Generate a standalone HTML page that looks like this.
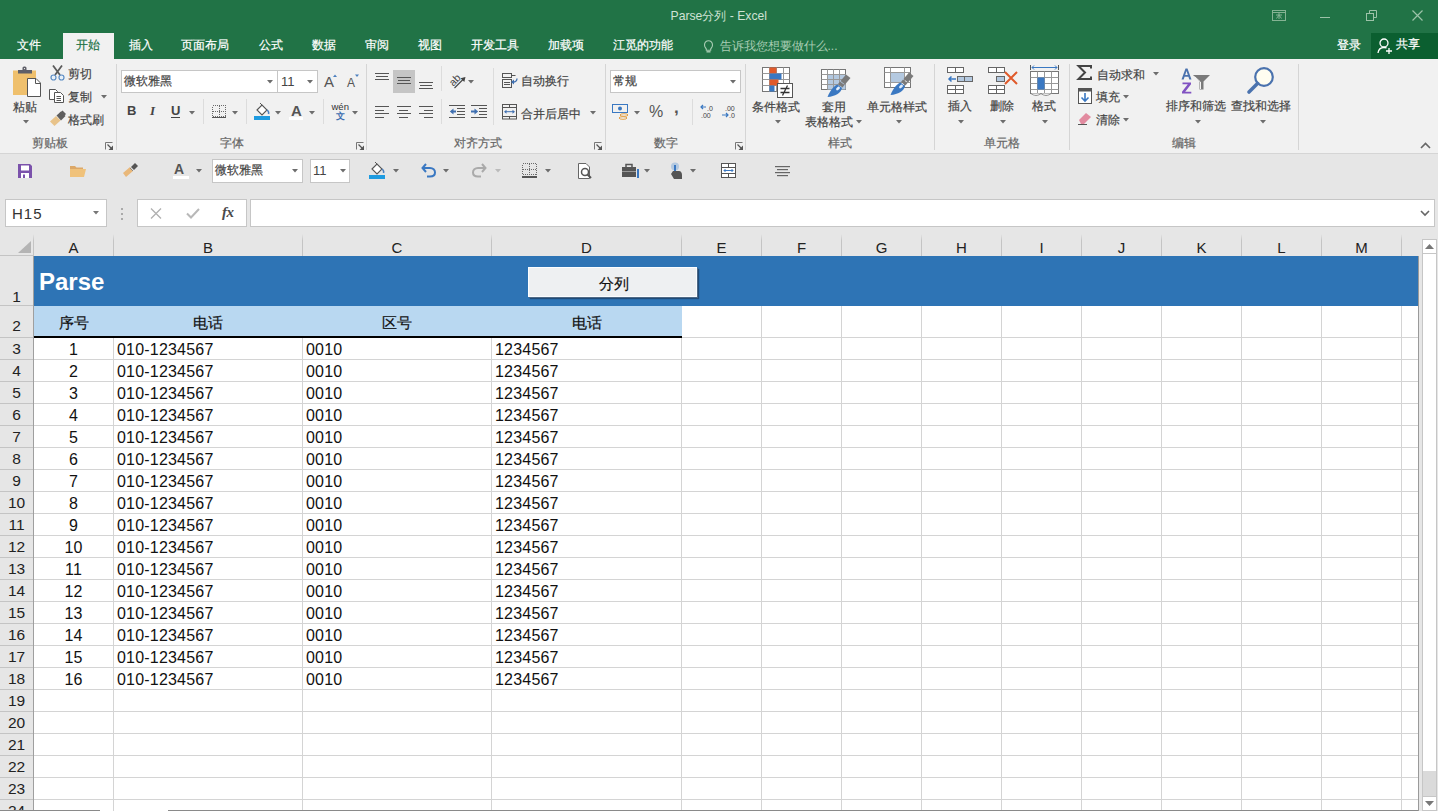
<!DOCTYPE html>
<html><head><meta charset="utf-8"><title>Parse分列 - Excel</title>
<style>
html,body{margin:0;padding:0;width:1438px;height:811px;overflow:hidden;background:#fff;}
body{position:relative;font-family:"Liberation Sans",sans-serif;}
.t{position:absolute;white-space:nowrap;line-height:normal;}
.b{position:absolute;}
svg.b{overflow:visible}
</style></head><body>
<div class="b" style="left:0px;top:0px;width:1438px;height:59px;background:#217346"></div>
<div class="t" style="left:670.5px;top:8px;font-size:12.2px;color:#cfe2d5;">Parse分列 - Excel</div>
<svg class="b" style="left:1272px;top:9px" width="14" height="12" viewBox="0 0 14 12"><rect x="0.5" y="1.5" width="13" height="10" fill="none" stroke="#85b393"/><path d="M0.5 3.5H13.5M4 6H10M7 4V10M4.5 9.5L7 6L9.5 9.5" stroke="#85b393" fill="none"/></svg>
<div class="b" style="left:1320px;top:17px;width:10px;height:1px;background:#9cc2a8"></div>
<svg class="b" style="left:1366px;top:10px" width="11" height="11" viewBox="0 0 11 11"><rect x="0.5" y="3.5" width="7" height="7" fill="none" stroke="#9cc2a8"/><path d="M3.5 3.5V0.5H10.5V7.5H7.5" fill="none" stroke="#9cc2a8"/></svg>
<svg class="b" style="left:1412px;top:10px" width="11" height="11" viewBox="0 0 11 11"><path d="M0.5 0.5L10.5 10.5M10.5 0.5L0.5 10.5" stroke="#9cc2a8" stroke-width="1.2"/></svg>
<div class="b" style="left:63px;top:33px;width:51px;height:26px;background:#f1f1f1"></div>
<div class="t" style="left:17px;top:37px;font-size:12px;color:#ffffff;;-webkit-text-stroke:0.2px #ffffff">文件</div>
<div class="t" style="left:76px;top:37px;font-size:12px;color:#217346;;-webkit-text-stroke:0.2px #217346">开始</div>
<div class="t" style="left:129px;top:37px;font-size:12px;color:#ffffff;;-webkit-text-stroke:0.2px #ffffff">插入</div>
<div class="t" style="left:181px;top:37px;font-size:12px;color:#ffffff;;-webkit-text-stroke:0.2px #ffffff">页面布局</div>
<div class="t" style="left:259px;top:37px;font-size:12px;color:#ffffff;;-webkit-text-stroke:0.2px #ffffff">公式</div>
<div class="t" style="left:312px;top:37px;font-size:12px;color:#ffffff;;-webkit-text-stroke:0.2px #ffffff">数据</div>
<div class="t" style="left:365px;top:37px;font-size:12px;color:#ffffff;;-webkit-text-stroke:0.2px #ffffff">审阅</div>
<div class="t" style="left:418px;top:37px;font-size:12px;color:#ffffff;;-webkit-text-stroke:0.2px #ffffff">视图</div>
<div class="t" style="left:471px;top:37px;font-size:12px;color:#ffffff;;-webkit-text-stroke:0.2px #ffffff">开发工具</div>
<div class="t" style="left:548px;top:37px;font-size:12px;color:#ffffff;;-webkit-text-stroke:0.2px #ffffff">加载项</div>
<div class="t" style="left:613px;top:37px;font-size:12px;color:#ffffff;;-webkit-text-stroke:0.2px #ffffff">江觅的功能</div>
<svg class="b" style="left:703px;top:40px" width="11" height="13" viewBox="0 0 11 13"><path d="M5.5 0.8C3.2 0.8 1.5 2.6 1.5 4.9C1.5 6.8 2.6 7.8 3.3 9V10.3H7.7V9C8.4 7.8 9.5 6.8 9.5 4.9C9.5 2.6 7.8 0.8 5.5 0.8Z" fill="none" stroke="#a9cdb4" stroke-width="1.1"/><path d="M3.5 11.8H7.5" stroke="#a9cdb4" stroke-width="1.4"/></svg>
<div class="t" style="left:719.5px;top:38px;font-size:12px;color:#a9cdb4;">告诉我您想要做什么...</div>
<div class="t" style="left:1337px;top:37px;font-size:12px;color:#ffffff;;-webkit-text-stroke:0.2px #ffffff">登录</div>
<div class="b" style="left:1371px;top:33px;width:67px;height:26px;background:#0b5f30"></div>
<svg class="b" style="left:1377px;top:38px" width="16" height="16" viewBox="0 0 16 16"><circle cx="7" cy="5" r="4" fill="none" stroke="#fff" stroke-width="1.3"/><path d="M1 15C1.5 11 3.5 9.5 7 9.5C8 9.5 9 9.7 9.6 10" fill="none" stroke="#fff" stroke-width="1.3"/><path d="M12 10V16M9 13H15" stroke="#fff" stroke-width="1.3"/></svg>
<div class="t" style="left:1396px;top:36px;font-size:12px;color:#ffffff;;-webkit-text-stroke:0.2px #ffffff">共享</div>
<div class="b" style="left:0px;top:59px;width:1438px;height:94px;background:#f1f1f1"></div>
<div class="b" style="left:0px;top:153px;width:1438px;height:1px;background:#d5d5d5"></div>
<div class="b" style="left:116px;top:64px;width:1px;height:86px;background:#d5d5d5"></div>
<div class="b" style="left:366px;top:64px;width:1px;height:86px;background:#d5d5d5"></div>
<div class="b" style="left:605px;top:64px;width:1px;height:86px;background:#d5d5d5"></div>
<div class="b" style="left:745px;top:64px;width:1px;height:86px;background:#d5d5d5"></div>
<div class="b" style="left:934px;top:64px;width:1px;height:86px;background:#d5d5d5"></div>
<div class="b" style="left:1069px;top:64px;width:1px;height:86px;background:#d5d5d5"></div>
<div class="b" style="left:1298px;top:64px;width:1px;height:86px;background:#d5d5d5"></div>
<div class="t" style="left:32px;top:135px;font-size:12px;color:#666;;-webkit-text-stroke:0.2px #666">剪贴板</div>
<div class="t" style="left:220px;top:135px;font-size:12px;color:#666;;-webkit-text-stroke:0.2px #666">字体</div>
<div class="t" style="left:454px;top:135px;font-size:12px;color:#666;;-webkit-text-stroke:0.2px #666">对齐方式</div>
<div class="t" style="left:654px;top:135px;font-size:12px;color:#666;;-webkit-text-stroke:0.2px #666">数字</div>
<div class="t" style="left:828px;top:135px;font-size:12px;color:#666;;-webkit-text-stroke:0.2px #666">样式</div>
<div class="t" style="left:984px;top:135px;font-size:12px;color:#666;;-webkit-text-stroke:0.2px #666">单元格</div>
<div class="t" style="left:1172px;top:135px;font-size:12px;color:#666;;-webkit-text-stroke:0.2px #666">编辑</div>
<svg class="b" style="left:105px;top:142px" width="8" height="8" viewBox="0 0 8 8"><path d="M0.5 7.5V0.5H7.5" fill="none" stroke="#777"/><path d="M2.5 2.5L6 6" stroke="#555" stroke-width="1.3"/><path d="M8 3.5V8H3.5Z" fill="#555"/></svg>
<svg class="b" style="left:356px;top:142px" width="8" height="8" viewBox="0 0 8 8"><path d="M0.5 7.5V0.5H7.5" fill="none" stroke="#777"/><path d="M2.5 2.5L6 6" stroke="#555" stroke-width="1.3"/><path d="M8 3.5V8H3.5Z" fill="#555"/></svg>
<svg class="b" style="left:594px;top:142px" width="8" height="8" viewBox="0 0 8 8"><path d="M0.5 7.5V0.5H7.5" fill="none" stroke="#777"/><path d="M2.5 2.5L6 6" stroke="#555" stroke-width="1.3"/><path d="M8 3.5V8H3.5Z" fill="#555"/></svg>
<svg class="b" style="left:735px;top:142px" width="8" height="8" viewBox="0 0 8 8"><path d="M0.5 7.5V0.5H7.5" fill="none" stroke="#777"/><path d="M2.5 2.5L6 6" stroke="#555" stroke-width="1.3"/><path d="M8 3.5V8H3.5Z" fill="#555"/></svg>
<svg class="b" style="left:1420px;top:142px" width="11" height="7" viewBox="0 0 11 7"><path d="M1 6L5.5 1.5L10 6" fill="none" stroke="#666" stroke-width="1.6"/></svg>
<svg class="b" style="left:13px;top:66px" width="29" height="32" viewBox="0 0 29 32"><rect x="0" y="4.5" width="23" height="24.5" fill="#efc06d"/>
<path d="M5 7.5V4H9.5V2C9.5 1 10.5 0.5 11.5 0.5C12.5 0.5 13.5 1 13.5 2V4H19V7.5Z" fill="#5f5f68"/><circle cx="11.5" cy="2.6" r="0.6" fill="#fff"/>
<path d="M14.5 12.5H23L27.5 17V30.5H14.5Z" fill="#fff" stroke="#555" stroke-width="1"/><path d="M22.5 12.5V17.5H27.5" fill="none" stroke="#555"/></svg>
<div class="t" style="left:13px;top:98.5px;font-size:12px;color:#444;;-webkit-text-stroke:0.2px #444">粘贴</div>
<svg class="b" style="left:23px;top:119.5px" width="6" height="3.5" viewBox="0 0 6 3.5"><path d="M0 0H6L3 3.5Z" fill="#6d6d6d"/></svg>
<svg class="b" style="left:50px;top:65px" width="15" height="16" viewBox="0 0 15 16"><path d="M3 0.5L10 10M12 0.5L5 10" stroke="#5a5a5a" stroke-width="1.8"/><circle cx="3.5" cy="12.5" r="2.5" fill="#e8f0f8" stroke="#5b8cc4" stroke-width="1.2"/><circle cx="11.5" cy="12.5" r="2.5" fill="#e8f0f8" stroke="#5b8cc4" stroke-width="1.2"/></svg>
<div class="t" style="left:68px;top:66px;font-size:12px;color:#444;;-webkit-text-stroke:0.2px #444">剪切</div>
<svg class="b" style="left:49px;top:89px" width="15" height="14" viewBox="0 0 15 14"><path d="M0.5 0.5H6.5L8.5 2.5V10.5H0.5Z" fill="#fff" stroke="#555"/><path d="M5.5 3.5H11.5L14.5 6.5V13.5H5.5Z" fill="#fff" stroke="#555"/><path d="M7.5 7.5H12M7.5 9.5H12M7.5 11.5H12" stroke="#555"/></svg>
<div class="t" style="left:68px;top:89px;font-size:12px;color:#444;;-webkit-text-stroke:0.2px #444">复制</div>
<svg class="b" style="left:101px;top:94.5px" width="6" height="3.5" viewBox="0 0 6 3.5"><path d="M0 0H6L3 3.5Z" fill="#6d6d6d"/></svg>
<svg class="b" style="left:50px;top:111px" width="16" height="15" viewBox="0 0 16 15"><path d="M0 10.5L6 5L10.5 9.5L4.5 15Z" fill="#e8c38a"/><path d="M6.5 4.5L11 0.5L15.5 5L11 9.5Z" fill="#5f5f5f"/><path d="M9 2.5L12.5 -0.5L16 3L13 6Z" fill="#5f5f5f"/></svg>
<div class="t" style="left:68px;top:112px;font-size:12px;color:#444;;-webkit-text-stroke:0.2px #444">格式刷</div>
<div class="b" style="left:121px;top:70px;width:157px;height:23px;background:#fff;border:1px solid #c6c6c6;box-sizing:border-box"></div>
<div class="b" style="left:277px;top:70px;width:41px;height:23px;background:#fff;border:1px solid #c6c6c6;box-sizing:border-box"></div>
<div class="t" style="left:124px;top:73px;font-size:12px;color:#444;;-webkit-text-stroke:0.2px #444">微软雅黑</div>
<svg class="b" style="left:267px;top:79.5px" width="6" height="3.5" viewBox="0 0 6 3.5"><path d="M0 0H6L3 3.5Z" fill="#6d6d6d"/></svg>
<div class="t" style="left:281px;top:73.5px;font-size:13px;color:#444;">11</div>
<svg class="b" style="left:307px;top:79.5px" width="6" height="3.5" viewBox="0 0 6 3.5"><path d="M0 0H6L3 3.5Z" fill="#6d6d6d"/></svg>
<svg class="b" style="left:324px;top:73px" width="14" height="14" viewBox="0 0 14 14"><text x="0" y="13.5" font-family="Liberation Sans" font-size="15" fill="#555">A</text><path d="M9 4L11 1.5L13 4Z" fill="#4a7fbf"/></svg>
<svg class="b" style="left:346px;top:73px" width="14" height="14" viewBox="0 0 14 14"><text x="1" y="13.5" font-family="Liberation Sans" font-size="12" fill="#555">A</text><path d="M9 1.5L11 4L13 1.5Z" fill="#4a7fbf"/></svg>
<div class="t" style="left:127px;top:103px;font-size:13px;color:#444;font-weight:bold">B</div>
<div class="t" style="left:150px;top:103px;font-size:13px;color:#444;font-style:italic;font-family:&quot;Liberation Serif&quot;,serif;font-weight:bold">I</div>
<div class="t" style="left:171px;top:103px;font-size:13px;color:#444;font-weight:bold">U</div>
<div class="b" style="left:171px;top:117px;width:9px;height:1px;background:#444"></div>
<svg class="b" style="left:189px;top:110.5px" width="6" height="3.5" viewBox="0 0 6 3.5"><path d="M0 0H6L3 3.5Z" fill="#6d6d6d"/></svg>
<div class="b" style="left:203px;top:99px;width:1px;height:25px;background:#dcdcdc"></div>
<svg class="b" style="left:212px;top:105px" width="14" height="13" viewBox="0 0 14 13"><path d="M0.5 0.5H13.5V11.5H0.5ZM7.5 0.5V11.5M0.5 6.5H13.5" fill="none" stroke="#6a6a6a" stroke-dasharray="1 1" shape-rendering="crispEdges"/><path d="M0 12.5H14" stroke="#555" shape-rendering="crispEdges"/></svg>
<svg class="b" style="left:232px;top:110.5px" width="6" height="3.5" viewBox="0 0 6 3.5"><path d="M0 0H6L3 3.5Z" fill="#6d6d6d"/></svg>
<div class="b" style="left:246px;top:99px;width:1px;height:25px;background:#dcdcdc"></div>
<svg class="b" style="left:254px;top:103px" width="17" height="17" viewBox="0 0 17 17"><path d="M3 7L8 2L13 7L8 12Z" fill="#fff" stroke="#555" stroke-width="1.1"/><path d="M8 2L6 0" stroke="#555"/><path d="M13 7C14.5 8 15 9.5 14.5 11" stroke="#4a7fbf" stroke-width="1.5" fill="none"/><rect x="0" y="13" width="16" height="4" fill="#1e9be0"/></svg>
<svg class="b" style="left:275px;top:110.5px" width="6" height="3.5" viewBox="0 0 6 3.5"><path d="M0 0H6L3 3.5Z" fill="#6d6d6d"/></svg>
<div class="t" style="left:291px;top:102px;font-size:15px;color:#555;font-weight:bold">A</div>
<div class="b" style="left:289px;top:117px;width:14px;height:3px;background:#fff"></div>
<svg class="b" style="left:309px;top:110.5px" width="6" height="3.5" viewBox="0 0 6 3.5"><path d="M0 0H6L3 3.5Z" fill="#6d6d6d"/></svg>
<div class="b" style="left:323px;top:99px;width:1px;height:25px;background:#dcdcdc"></div>
<div class="t" style="left:331.5px;top:101px;font-size:9.5px;color:#333;">wén</div>
<div class="t" style="left:335.5px;top:110px;font-size:9px;color:#3f6fb0;font-weight:bold">文</div>
<svg class="b" style="left:352px;top:110.5px" width="6" height="3.5" viewBox="0 0 6 3.5"><path d="M0 0H6L3 3.5Z" fill="#6d6d6d"/></svg>
<div class="b" style="left:375px;top:73px;width:14px;height:1px;background:#555"></div>
<div class="b" style="left:376px;top:76px;width:12px;height:1px;background:#555"></div>
<div class="b" style="left:375px;top:79px;width:14px;height:1px;background:#555"></div>
<div class="b" style="left:397px;top:77px;width:14px;height:1px;background:#555"></div>
<div class="b" style="left:398px;top:80px;width:12px;height:1px;background:#555"></div>
<div class="b" style="left:397px;top:83px;width:14px;height:1px;background:#555"></div>
<div class="b" style="left:419px;top:82px;width:14px;height:1px;background:#555"></div>
<div class="b" style="left:420px;top:85px;width:12px;height:1px;background:#555"></div>
<div class="b" style="left:419px;top:88px;width:14px;height:1px;background:#555"></div>
<div class="b" style="left:393px;top:70px;width:22px;height:23px;background:#c5c5c5"></div>
<div class="b" style="left:397px;top:77px;width:14px;height:1px;background:#555"></div>
<div class="b" style="left:398px;top:80px;width:12px;height:1px;background:#555"></div>
<div class="b" style="left:397px;top:83px;width:14px;height:1px;background:#555"></div>
<div class="b" style="left:375px;top:106.0px;width:14px;height:1px;background:#555"></div>
<div class="b" style="left:397px;top:106.0px;width:14px;height:1px;background:#555"></div>
<div class="b" style="left:419px;top:106.0px;width:14px;height:1px;background:#555"></div>
<div class="b" style="left:375px;top:109.5px;width:9px;height:1px;background:#555"></div>
<div class="b" style="left:399px;top:109.5px;width:9px;height:1px;background:#555"></div>
<div class="b" style="left:424px;top:109.5px;width:9px;height:1px;background:#555"></div>
<div class="b" style="left:375px;top:113.0px;width:14px;height:1px;background:#555"></div>
<div class="b" style="left:397px;top:113.0px;width:14px;height:1px;background:#555"></div>
<div class="b" style="left:419px;top:113.0px;width:14px;height:1px;background:#555"></div>
<div class="b" style="left:375px;top:116.5px;width:9px;height:1px;background:#555"></div>
<div class="b" style="left:399px;top:116.5px;width:9px;height:1px;background:#555"></div>
<div class="b" style="left:424px;top:116.5px;width:9px;height:1px;background:#555"></div>
<div class="b" style="left:441px;top:99px;width:1px;height:25px;background:#dcdcdc"></div>
<div class="b" style="left:441px;top:66px;width:1px;height:25px;background:#dcdcdc"></div>
<svg class="b" style="left:449px;top:73px" width="18" height="16" viewBox="0 0 18 16"><g transform="rotate(-45 6 7)"><text x="0" y="10.5" font-family="Liberation Sans" font-size="10.5" fill="#444">ab</text></g><path d="M5.5 15L15.5 5" stroke="#444" stroke-width="1.1"/><path d="M16.5 4L11.5 5.2L15.3 9Z" fill="#444"/></svg>
<svg class="b" style="left:468px;top:79.5px" width="6" height="3.5" viewBox="0 0 6 3.5"><path d="M0 0H6L3 3.5Z" fill="#6d6d6d"/></svg>
<svg class="b" style="left:449px;top:104px" width="16" height="14" viewBox="0 0 16 14"><g fill="#555"><rect x="0" y="1" width="16" height="1"/><rect x="8" y="4" width="8" height="1"/><rect x="8" y="7" width="8" height="1"/><rect x="8" y="10" width="8" height="1"/><rect x="0" y="13" width="16" height="1"/></g><path d="M7 7.5H2.5" stroke="#3f6fb0" stroke-width="2"/><path d="M4.5 4.5L0.8 7.5L4.5 10.5Z" fill="#3f6fb0"/></svg>
<svg class="b" style="left:471px;top:104px" width="16" height="14" viewBox="0 0 16 14"><g fill="#555"><rect x="0" y="1" width="16" height="1"/><rect x="8" y="4" width="8" height="1"/><rect x="8" y="7" width="8" height="1"/><rect x="8" y="10" width="8" height="1"/><rect x="0" y="13" width="16" height="1"/></g><path d="M0 7.5H4" stroke="#3f6fb0" stroke-width="2"/><path d="M3.5 4.5L7.2 7.5L3.5 10.5Z" fill="#3f6fb0"/></svg>
<div class="b" style="left:493px;top:68px;width:1px;height:57px;background:#dcdcdc"></div>
<svg class="b" style="left:501px;top:73px" width="18" height="16" viewBox="0 0 18 16"><rect x="1.5" y="0.5" width="9" height="4" fill="none" stroke="#555"/><path d="M10.5 2.5H14.5" stroke="#555"/><rect x="1.5" y="6.5" width="9" height="8" fill="none" stroke="#555"/><path d="M3 9.5H9M3 11.5H9" stroke="#555"/><path d="M16 5.5C16 8 14.5 9 12 9" fill="none" stroke="#3f6fb0" stroke-width="1.3"/><path d="M13 6.5L10 9L13 11.5Z" fill="#3f6fb0"/></svg>
<div class="t" style="left:521px;top:73px;font-size:12px;color:#444;;-webkit-text-stroke:0.2px #444">自动换行</div>
<svg class="b" style="left:501px;top:104px" width="16" height="16" viewBox="0 0 16 16"><rect x="1.5" y="0.5" width="14" height="14.5" fill="none" stroke="#555"/><path d="M1.5 3.5H15.5M1.5 12.5H15.5M8.5 0.5V3.5M8.5 12.5V15" stroke="#555"/><path d="M4.5 7.7H12.5" stroke="#3f6fb0"/><path d="M3 7.7L5.5 5.7V9.7ZM14 7.7L11.5 5.7V9.7Z" fill="#3f6fb0"/></svg>
<div class="t" style="left:521px;top:105.5px;font-size:12px;color:#444;;-webkit-text-stroke:0.2px #444">合并后居中</div>
<svg class="b" style="left:590px;top:110.5px" width="6" height="3.5" viewBox="0 0 6 3.5"><path d="M0 0H6L3 3.5Z" fill="#6d6d6d"/></svg>
<div class="b" style="left:610px;top:70px;width:131px;height:23px;background:#fff;border:1px solid #c6c6c6;box-sizing:border-box"></div>
<div class="t" style="left:613px;top:73px;font-size:12px;color:#444;;-webkit-text-stroke:0.2px #444">常规</div>
<svg class="b" style="left:730px;top:79.5px" width="6" height="3.5" viewBox="0 0 6 3.5"><path d="M0 0H6L3 3.5Z" fill="#6d6d6d"/></svg>
<svg class="b" style="left:612px;top:104px" width="18" height="16" viewBox="0 0 18 16"><rect x="0.5" y="0.5" width="15" height="8" fill="none" stroke="#3a78c2"/><circle cx="8" cy="4.5" r="2" fill="#3a78c2"/><ellipse cx="12" cy="11" rx="4" ry="1.3" fill="none" stroke="#e3a24a"/><ellipse cx="11" cy="14" rx="4" ry="1.3" fill="none" stroke="#e3a24a"/></svg>
<svg class="b" style="left:634px;top:110.5px" width="6" height="3.5" viewBox="0 0 6 3.5"><path d="M0 0H6L3 3.5Z" fill="#6d6d6d"/></svg>
<div class="t" style="left:649px;top:103px;font-size:16px;color:#555;">%</div>
<div class="t" style="left:674px;top:98px;font-size:17px;color:#555;font-weight:bold">,</div>
<div class="b" style="left:692px;top:99px;width:1px;height:26px;background:#dcdcdc"></div>
<svg class="b" style="left:700px;top:105px" width="15" height="14" viewBox="0 0 15 14"><path d="M6 2H1M3 0L1 2L3 4" fill="none" stroke="#3a78c2" stroke-width="1.2"/><text x="7" y="6" font-family="Liberation Sans" font-size="7" fill="#444">.0</text><text x="1" y="13" font-family="Liberation Sans" font-size="7" fill="#444">.00</text></svg>
<svg class="b" style="left:722px;top:105px" width="15" height="14" viewBox="0 0 15 14"><text x="3" y="6" font-family="Liberation Sans" font-size="7" fill="#444">.00</text><path d="M0 10H6M4 8L6 10L4 12" fill="none" stroke="#3a78c2" stroke-width="1.2"/><text x="7" y="13" font-family="Liberation Sans" font-size="7" fill="#444">.0</text></svg>
<svg class="b" style="left:762px;top:67px" width="31" height="31" viewBox="0 0 31 31"><g stroke="#777" fill="#fff"><rect x="0.5" y="0.5" width="27" height="24"/></g>
<path d="M0.5 6.5H27.5M0.5 12.5H27.5M0.5 18.5H27.5M7.5 0.5V24.5M14.5 0.5V24.5M21.5 0.5V24.5" stroke="#999"/>
<rect x="7.5" y="0.5" width="7" height="6" fill="#e05a2b"/><rect x="7.5" y="6.5" width="12" height="6" fill="#3a78c2"/><rect x="7.5" y="12.5" width="9" height="6" fill="#e05a2b"/><rect x="7.5" y="18.5" width="5" height="6" fill="#3a78c2"/>
<rect x="15.5" y="16.5" width="15" height="14" fill="#fff" stroke="#555"/><path d="M18.5 21.5H27.5M18.5 25.5H27.5M25.5 18.5L20.5 28.5" stroke="#333" stroke-width="1.3" fill="none"/></svg>
<div class="t" style="left:752px;top:99px;font-size:12px;color:#444;;-webkit-text-stroke:0.2px #444">条件格式</div>
<svg class="b" style="left:775px;top:119.5px" width="6" height="3.5" viewBox="0 0 6 3.5"><path d="M0 0H6L3 3.5Z" fill="#6d6d6d"/></svg>
<svg class="b" style="left:821px;top:69px" width="30" height="29" viewBox="0 0 30 29"><rect x="0.5" y="0.5" width="24" height="20" fill="#fff" stroke="#777"/><rect x="6.5" y="5.5" width="18" height="15" fill="#b4c9e0"/>
<path d="M0.5 5.5H24.5M0.5 10.5H24.5M0.5 15.5H24.5M6.5 0.5V20.5M12.5 0.5V20.5M18.5 0.5V20.5" stroke="#999"/>
<path d="M25 5.5L29.5 9L24 15.5L19.5 12Z" fill="#7a7a7a"/><path d="M19 12.5L23.5 16L21.5 18.5L17 15Z" fill="#7a7a7a"/><path d="M16.5 15.5L21 19C20 24 14 27.5 6.5 28C9 22 12 17.5 16.5 15.5Z" fill="#3a78c2"/><ellipse cx="17" cy="19.5" rx="2.2" ry="1.4" fill="#e3eefa" transform="rotate(-40 17 19.5)"/></svg>
<div class="t" style="left:822px;top:99px;font-size:12px;color:#444;;-webkit-text-stroke:0.2px #444">套用</div>
<div class="t" style="left:805px;top:114px;font-size:12px;color:#444;;-webkit-text-stroke:0.2px #444">表格格式</div>
<svg class="b" style="left:856px;top:119.5px" width="6" height="3.5" viewBox="0 0 6 3.5"><path d="M0 0H6L3 3.5Z" fill="#6d6d6d"/></svg>
<svg class="b" style="left:884px;top:67px" width="30" height="29" viewBox="0 0 30 29"><rect x="0.5" y="0.5" width="26" height="20" fill="#fff" stroke="#777"/><rect x="6.5" y="5.5" width="14" height="10" fill="#b4c9e0"/>
<path d="M0.5 5.5H26.5M0.5 15.5H26.5M6.5 0.5V20.5M20.5 0.5V20.5" stroke="#999"/>
<path d="M25 5.5L29.5 9L24 15.5L19.5 12Z" fill="#7a7a7a"/><path d="M19 12.5L23.5 16L21.5 18.5L17 15Z" fill="#7a7a7a"/><path d="M16.5 15.5L21 19C20 24 14 27.5 6.5 28C9 22 12 17.5 16.5 15.5Z" fill="#3a78c2"/><ellipse cx="17" cy="19.5" rx="2.2" ry="1.4" fill="#e3eefa" transform="rotate(-40 17 19.5)"/></svg>
<div class="t" style="left:867px;top:99px;font-size:12px;color:#444;;-webkit-text-stroke:0.2px #444">单元格样式</div>
<svg class="b" style="left:896px;top:119.5px" width="6" height="3.5" viewBox="0 0 6 3.5"><path d="M0 0H6L3 3.5Z" fill="#6d6d6d"/></svg>
<svg class="b" style="left:947px;top:67px" width="26" height="27" viewBox="0 0 26 27"><g fill="#fff" stroke="#666"><rect x="0.5" y="0.5" width="8" height="5"/><rect x="8.5" y="0.5" width="8" height="5"/>
<rect x="0.5" y="18.5" width="8" height="4"/><rect x="8.5" y="18.5" width="8" height="4"/><rect x="0.5" y="22.5" width="8" height="4"/><rect x="8.5" y="22.5" width="8" height="4"/></g>
<g fill="#b4c9e0" stroke="#666"><rect x="10.5" y="9.5" width="7" height="5"/><rect x="17.5" y="9.5" width="8" height="5"/></g>
<path d="M9 12H2M4.5 9.5L2 12L4.5 14.5" fill="none" stroke="#3a78c2" stroke-width="1.5"/></svg>
<div class="t" style="left:948px;top:98px;font-size:12px;color:#444;;-webkit-text-stroke:0.2px #444">插入</div>
<svg class="b" style="left:958px;top:119.5px" width="6" height="3.5" viewBox="0 0 6 3.5"><path d="M0 0H6L3 3.5Z" fill="#6d6d6d"/></svg>
<svg class="b" style="left:988px;top:67px" width="30" height="27" viewBox="0 0 30 27"><g fill="#fff" stroke="#666"><rect x="0.5" y="0.5" width="8" height="5"/><rect x="8.5" y="0.5" width="8" height="5"/>
<rect x="0.5" y="18.5" width="8" height="4"/><rect x="8.5" y="18.5" width="8" height="4"/><rect x="0.5" y="22.5" width="8" height="4"/><rect x="8.5" y="22.5" width="8" height="4"/></g>
<g fill="#b4c9e0" stroke="#666"><rect x="8.5" y="9.5" width="8" height="5"/></g>
<path d="M17 5L29 17M29 5L17 17" stroke="#e05a2b" stroke-width="2"/></svg>
<div class="t" style="left:990px;top:98px;font-size:12px;color:#444;;-webkit-text-stroke:0.2px #444">删除</div>
<svg class="b" style="left:1000px;top:119.5px" width="6" height="3.5" viewBox="0 0 6 3.5"><path d="M0 0H6L3 3.5Z" fill="#6d6d6d"/></svg>
<svg class="b" style="left:1030px;top:65px" width="29" height="32" viewBox="0 0 29 32"><path d="M2 2.5H27M4 0.5L2 2.5L4 4.5M25 0.5L27 2.5L25 4.5" fill="none" stroke="#3a78c2"/><path d="M0.5 0V5M28.5 0V5" stroke="#555"/>
<rect x="0.5" y="6.5" width="28" height="22" fill="#fff" stroke="#777"/><path d="M0.5 12.5H28.5M0.5 18.5H28.5M0.5 24.5H28.5M7.5 6.5V28.5M14.5 6.5V28.5M21.5 6.5V28.5" stroke="#999"/>
<rect x="7.5" y="12.5" width="7" height="12" fill="#3a78c2"/><path d="M1 28.5C4 31 8 31 11 28.5C14 31 18 31 21 28.5" fill="#fff" stroke="#888"/></svg>
<div class="t" style="left:1032px;top:98px;font-size:12px;color:#444;;-webkit-text-stroke:0.2px #444">格式</div>
<svg class="b" style="left:1042px;top:119.5px" width="6" height="3.5" viewBox="0 0 6 3.5"><path d="M0 0H6L3 3.5Z" fill="#6d6d6d"/></svg>
<svg class="b" style="left:1077px;top:65px" width="15" height="15" viewBox="0 0 15 15"><path d="M14 3.5V1H1.5L8 7.5L1.5 14H14V11.5" fill="none" stroke="#444" stroke-width="2" stroke-linejoin="miter"/></svg>
<div class="t" style="left:1096.5px;top:67px;font-size:12px;color:#444;;-webkit-text-stroke:0.2px #444">自动求和</div>
<svg class="b" style="left:1153px;top:71.5px" width="6" height="3.5" viewBox="0 0 6 3.5"><path d="M0 0H6L3 3.5Z" fill="#6d6d6d"/></svg>
<svg class="b" style="left:1078px;top:88px" width="14" height="16" viewBox="0 0 14 16"><rect x="0.5" y="0.5" width="13" height="15" fill="#fff" stroke="#555"/><rect x="0.5" y="0.5" width="13" height="3" fill="#555"/><path d="M7 5V13M3.5 9.5L7 13L10.5 9.5" fill="none" stroke="#3a78c2" stroke-width="1.6"/></svg>
<div class="t" style="left:1096px;top:89px;font-size:12px;color:#444;;-webkit-text-stroke:0.2px #444">填充</div>
<svg class="b" style="left:1123px;top:94.5px" width="6" height="3.5" viewBox="0 0 6 3.5"><path d="M0 0H6L3 3.5Z" fill="#6d6d6d"/></svg>
<svg class="b" style="left:1078px;top:112px" width="14" height="13" viewBox="0 0 14 13"><path d="M1 8L8 1L13 5L6 12H3Z" fill="#e28ba0"/><path d="M0 12.5H9" stroke="#555"/></svg>
<div class="t" style="left:1096px;top:112px;font-size:12px;color:#444;;-webkit-text-stroke:0.2px #444">清除</div>
<svg class="b" style="left:1123px;top:117.5px" width="6" height="3.5" viewBox="0 0 6 3.5"><path d="M0 0H6L3 3.5Z" fill="#6d6d6d"/></svg>
<svg class="b" style="left:1181px;top:67px" width="30" height="28" viewBox="0 0 30 28"><path d="M0.5 12.5L4.5 1.5H6.5L10.5 12.5H8.3L7.4 9.8H3.6L2.7 12.5ZM4.2 8H6.8L5.5 4Z" fill="#4a72ae"/>
<path d="M1.5 15.5H10V17.3L4.2 24.7H10.3V26.5H1V24.7L6.8 17.3H1.5Z" fill="#8152c2"/>
<path d="M12 8H29L22.5 14.5V22.5H18.5V14.5Z" fill="#7a7a7a"/><path d="M13.5 9.5L19.5 15V22" fill="none" stroke="#f4f4f4" stroke-width="1"/></svg>
<div class="t" style="left:1166px;top:98px;font-size:12px;color:#444;;-webkit-text-stroke:0.2px #444">排序和筛选</div>
<svg class="b" style="left:1195px;top:119.5px" width="6" height="3.5" viewBox="0 0 6 3.5"><path d="M0 0H6L3 3.5Z" fill="#6d6d6d"/></svg>
<svg class="b" style="left:1246px;top:66px" width="29" height="29" viewBox="0 0 29 29"><circle cx="18" cy="11" r="8.8" fill="#fffdf0" stroke="#4a72ae" stroke-width="2.2"/><path d="M11.5 17.5L3 26" stroke="#4a72ae" stroke-width="3.6" stroke-linecap="round"/></svg>
<div class="t" style="left:1231px;top:98px;font-size:12px;color:#444;;-webkit-text-stroke:0.2px #444">查找和选择</div>
<svg class="b" style="left:1260px;top:119.5px" width="6" height="3.5" viewBox="0 0 6 3.5"><path d="M0 0H6L3 3.5Z" fill="#6d6d6d"/></svg>
<div class="b" style="left:0px;top:154px;width:1438px;height:102px;background:#e6e6e6"></div>
<svg class="b" style="left:18px;top:164px" width="14" height="14" viewBox="0 0 14 14"><path d="M0 0H12L14 2V14H0Z" fill="#7b52ab"/><rect x="3" y="1.5" width="8" height="5" fill="#fff"/><rect x="3" y="9" width="8" height="5" fill="#fff"/><rect x="5" y="10.5" width="2" height="3.5" fill="#7b52ab"/></svg>
<svg class="b" style="left:70px;top:164px" width="16" height="13" viewBox="0 0 16 13"><path d="M0 2H5L6.5 3.5H13V6H0Z" fill="#dca868"/><path d="M0 5H16L14 13H0Z" fill="#f0c27b"/></svg>
<svg class="b" style="left:123px;top:163px" width="17" height="15" viewBox="0 0 17 15"><path d="M0 10L7 4L10 8L3 14Z" fill="#e9b87a"/><path d="M8 4L12 0L15 3L11 7Z" fill="#555"/><path d="M7 5L10 8" stroke="#888"/></svg>
<div class="t" style="left:174px;top:161px;font-size:14px;color:#555;font-weight:bold">A</div>
<div class="b" style="left:173px;top:176px;width:16px;height:3px;background:#fff"></div>
<svg class="b" style="left:196px;top:168.5px" width="6" height="3.5" viewBox="0 0 6 3.5"><path d="M0 0H6L3 3.5Z" fill="#6d6d6d"/></svg>
<div class="b" style="left:212px;top:159px;width:91px;height:24px;background:#fff;border:1px solid #c6c6c6;box-sizing:border-box"></div>
<div class="t" style="left:215px;top:162px;font-size:12px;color:#444;;-webkit-text-stroke:0.2px #444">微软雅黑</div>
<svg class="b" style="left:292px;top:168.5px" width="6" height="3.5" viewBox="0 0 6 3.5"><path d="M0 0H6L3 3.5Z" fill="#6d6d6d"/></svg>
<div class="b" style="left:310px;top:159px;width:40px;height:24px;background:#fff;border:1px solid #c6c6c6;box-sizing:border-box"></div>
<div class="t" style="left:313px;top:163px;font-size:13px;color:#444;">11</div>
<svg class="b" style="left:340px;top:168.5px" width="6" height="3.5" viewBox="0 0 6 3.5"><path d="M0 0H6L3 3.5Z" fill="#6d6d6d"/></svg>
<svg class="b" style="left:369px;top:162px" width="17" height="17" viewBox="0 0 17 17"><path d="M3 7L8 2L13 7L8 12Z" fill="#fff" stroke="#555" stroke-width="1.1"/><path d="M8 2L6 0" stroke="#555"/><path d="M13 7C14.5 8 15 9.5 14.5 11" stroke="#4a7fbf" stroke-width="1.5" fill="none"/><rect x="0" y="13" width="16" height="4" fill="#1e9be0"/></svg>
<svg class="b" style="left:393px;top:168.5px" width="6" height="3.5" viewBox="0 0 6 3.5"><path d="M0 0H6L3 3.5Z" fill="#6d6d6d"/></svg>
<svg class="b" style="left:421px;top:163px" width="15" height="14" viewBox="0 0 15 14"><path d="M2 5H9C12 5 14 7 14 9.5C14 12 12 13.5 9 13.5H6" fill="none" stroke="#3a78c2" stroke-width="2"/><path d="M5 1L1.5 5L5 9" fill="none" stroke="#3a78c2" stroke-width="2"/></svg>
<svg class="b" style="left:443px;top:168.5px" width="6" height="3.5" viewBox="0 0 6 3.5"><path d="M0 0H6L3 3.5Z" fill="#6d6d6d"/></svg>
<svg class="b" style="left:471px;top:163px" width="16" height="14" viewBox="0 0 16 14"><path d="M14 5H7C4 5 2 7 2 9.5C2 12 4 13.5 7 13.5H10" fill="none" stroke="#aaa" stroke-width="2"/><path d="M11 1L14.5 5L11 9" fill="none" stroke="#aaa" stroke-width="2"/></svg>
<svg class="b" style="left:495px;top:168.5px" width="6" height="3.5" viewBox="0 0 6 3.5"><path d="M0 0H6L3 3.5Z" fill="#bbb"/></svg>
<svg class="b" style="left:522px;top:163px" width="15" height="15" viewBox="0 0 15 15"><path d="M0.5 0.5H14.5V11.5H0.5ZM7.5 0.5V11.5M0.5 6.5H14.5" fill="none" stroke="#6a6a6a" stroke-dasharray="1 1" shape-rendering="crispEdges"/><rect x="0" y="13" width="15" height="2" fill="#555"/></svg>
<svg class="b" style="left:545px;top:168.5px" width="6" height="3.5" viewBox="0 0 6 3.5"><path d="M0 0H6L3 3.5Z" fill="#6d6d6d"/></svg>
<svg class="b" style="left:578px;top:163px" width="14" height="16" viewBox="0 0 14 16"><path d="M0.5 0.5H8L11.5 4V15.5H0.5Z" fill="#fff" stroke="#666"/><circle cx="7" cy="9" r="3.5" fill="#fff" stroke="#555" stroke-width="1.5"/><path d="M9.5 11.5L13 15" stroke="#555" stroke-width="2"/></svg>
<svg class="b" style="left:622px;top:163px" width="18" height="16" viewBox="0 0 18 16"><rect x="0" y="4" width="14" height="10" fill="#555"/><path d="M4 4V1.5H10V4" fill="none" stroke="#555" stroke-width="1.5"/><rect x="0" y="8" width="14" height="1" fill="#999"/><path d="M16 6V15" stroke="#3a78c2" stroke-width="2"/></svg>
<svg class="b" style="left:644px;top:168.5px" width="6" height="3.5" viewBox="0 0 6 3.5"><path d="M0 0H6L3 3.5Z" fill="#6d6d6d"/></svg>
<svg class="b" style="left:670px;top:162px" width="13" height="17" viewBox="0 0 13 17"><circle cx="5" cy="4.5" r="4" fill="#b4c9e0"/><path d="M5 3V10" stroke="#3a78c2" stroke-width="2"/><path d="M3 9H9C11 9 12 11 12 13V17H4L1 12Z" fill="#555"/></svg>
<svg class="b" style="left:690px;top:168.5px" width="6" height="3.5" viewBox="0 0 6 3.5"><path d="M0 0H6L3 3.5Z" fill="#6d6d6d"/></svg>
<svg class="b" style="left:721px;top:163px" width="15" height="15" viewBox="0 0 15 15"><rect x="0.5" y="0.5" width="14" height="14" fill="#fff" stroke="#555"/><path d="M0.5 4.5H14.5M0.5 10.5H14.5M7.5 0.5V4.5M7.5 10.5V14.5" stroke="#555"/><path d="M3 7.5H12M4.5 6L3 7.5L4.5 9M10.5 6L12 7.5L10.5 9" fill="none" stroke="#3a78c2"/></svg>
<svg class="b" style="left:775px;top:166px" width="15" height="10" viewBox="0 0 15 10"><rect x="0" y="0" width="15" height="1.2" fill="#666"/><rect x="2" y="3" width="11" height="1.2" fill="#666"/><rect x="0" y="6" width="15" height="1.2" fill="#666"/><rect x="2" y="9" width="11" height="1.2" fill="#666"/></svg>
<div class="b" style="left:5px;top:199px;width:102px;height:28px;background:#fff;border:1px solid #c6c6c6;box-sizing:border-box"></div>
<div class="t" style="left:12px;top:205px;font-size:15px;color:#333;letter-spacing:1px">H15</div>
<svg class="b" style="left:93px;top:210.5px" width="6" height="3.5" viewBox="0 0 6 3.5"><path d="M0 0H6L3 3.5Z" fill="#777"/></svg>
<div class="b" style="left:121px;top:208px;width:2px;height:2px;background:#aaa"></div>
<div class="b" style="left:121px;top:213px;width:2px;height:2px;background:#aaa"></div>
<div class="b" style="left:121px;top:218px;width:2px;height:2px;background:#aaa"></div>
<div class="b" style="left:137px;top:199px;width:110px;height:28px;background:#fff;border:1px solid #c6c6c6;box-sizing:border-box"></div>
<svg class="b" style="left:150px;top:208px" width="12" height="11" viewBox="0 0 12 11"><path d="M1 0.5L11 10.5M11 0.5L1 10.5" stroke="#b0b0b0" stroke-width="1.3"/></svg>
<svg class="b" style="left:186px;top:208px" width="14" height="11" viewBox="0 0 14 11"><path d="M1 5.5L5 9.5L13 1" fill="none" stroke="#b8b8b8" stroke-width="2"/></svg>
<div class="t" style="left:222px;top:204px;font-size:15px;color:#4a4a4a;font-family:&quot;Liberation Serif&quot;,serif;letter-spacing:-0.5px"><i><b>fx</b></i></div>
<div class="b" style="left:250px;top:199px;width:1185px;height:28px;background:#fff;border:1px solid #c6c6c6;box-sizing:border-box"></div>
<svg class="b" style="left:1420px;top:210px" width="10" height="7" viewBox="0 0 10 7"><path d="M1 1L5 5L9 1" fill="none" stroke="#666" stroke-width="1.6"/></svg>
<div class="b" style="left:113px;top:234px;width:1px;height:22px;background:linear-gradient(#e6e6e6,#c4c4c4 30%)"></div>
<div class="b" style="left:302px;top:234px;width:1px;height:22px;background:linear-gradient(#e6e6e6,#c4c4c4 30%)"></div>
<div class="b" style="left:491px;top:234px;width:1px;height:22px;background:linear-gradient(#e6e6e6,#c4c4c4 30%)"></div>
<div class="b" style="left:681px;top:234px;width:1px;height:22px;background:linear-gradient(#e6e6e6,#c4c4c4 30%)"></div>
<div class="b" style="left:761px;top:234px;width:1px;height:22px;background:linear-gradient(#e6e6e6,#c4c4c4 30%)"></div>
<div class="b" style="left:841px;top:234px;width:1px;height:22px;background:linear-gradient(#e6e6e6,#c4c4c4 30%)"></div>
<div class="b" style="left:921px;top:234px;width:1px;height:22px;background:linear-gradient(#e6e6e6,#c4c4c4 30%)"></div>
<div class="b" style="left:1001px;top:234px;width:1px;height:22px;background:linear-gradient(#e6e6e6,#c4c4c4 30%)"></div>
<div class="b" style="left:1081px;top:234px;width:1px;height:22px;background:linear-gradient(#e6e6e6,#c4c4c4 30%)"></div>
<div class="b" style="left:1161px;top:234px;width:1px;height:22px;background:linear-gradient(#e6e6e6,#c4c4c4 30%)"></div>
<div class="b" style="left:1241px;top:234px;width:1px;height:22px;background:linear-gradient(#e6e6e6,#c4c4c4 30%)"></div>
<div class="b" style="left:1321px;top:234px;width:1px;height:22px;background:linear-gradient(#e6e6e6,#c4c4c4 30%)"></div>
<div class="b" style="left:1401px;top:234px;width:1px;height:22px;background:linear-gradient(#e6e6e6,#c4c4c4 30%)"></div>
<div class="b" style="left:33px;top:234px;width:1px;height:22px;background:linear-gradient(#e6e6e6,#c4c4c4 30%)"></div>
<svg class="b" style="left:18px;top:241px" width="13" height="12" viewBox="0 0 13 12"><path d="M13 0V12H0Z" fill="#b4b4b4"/></svg>
<div class="t" style="left:34px;width:79px;top:239px;font-size:15px;color:#222;text-align:center">A</div>
<div class="t" style="left:114px;width:188px;top:239px;font-size:15px;color:#222;text-align:center">B</div>
<div class="t" style="left:303px;width:188px;top:239px;font-size:15px;color:#222;text-align:center">C</div>
<div class="t" style="left:492px;width:189px;top:239px;font-size:15px;color:#222;text-align:center">D</div>
<div class="t" style="left:682px;width:79px;top:239px;font-size:15px;color:#222;text-align:center">E</div>
<div class="t" style="left:762px;width:79px;top:239px;font-size:15px;color:#222;text-align:center">F</div>
<div class="t" style="left:842px;width:79px;top:239px;font-size:15px;color:#222;text-align:center">G</div>
<div class="t" style="left:922px;width:79px;top:239px;font-size:15px;color:#222;text-align:center">H</div>
<div class="t" style="left:1002px;width:79px;top:239px;font-size:15px;color:#222;text-align:center">I</div>
<div class="t" style="left:1082px;width:79px;top:239px;font-size:15px;color:#222;text-align:center">J</div>
<div class="t" style="left:1162px;width:79px;top:239px;font-size:15px;color:#222;text-align:center">K</div>
<div class="t" style="left:1242px;width:79px;top:239px;font-size:15px;color:#222;text-align:center">L</div>
<div class="t" style="left:1322px;width:79px;top:239px;font-size:15px;color:#222;text-align:center">M</div>
<div class="b" style="left:34px;top:256px;width:1385px;height:555px;background:#fff"></div>
<div class="b" style="left:0px;top:256px;width:33px;height:555px;background:#e6e6e6"></div>
<div class="b" style="left:33px;top:256px;width:1px;height:555px;background:#9f9f9f"></div>
<div class="b" style="left:0px;top:255px;width:34px;height:1px;background:#c4c4c4"></div>
<div class="b" style="left:0px;top:305px;width:33px;height:1px;background:#c4c4c4"></div>
<div class="t" style="left:0;width:33px;top:287.5px;font-size:15.5px;color:#222;text-align:center">1</div>
<div class="b" style="left:0px;top:337px;width:33px;height:1px;background:#c4c4c4"></div>
<div class="t" style="left:0;width:33px;top:317px;font-size:15.5px;color:#222;text-align:center">2</div>
<div class="b" style="left:0px;top:359px;width:33px;height:1px;background:#c4c4c4"></div>
<div class="t" style="left:0;width:33px;top:340px;font-size:15.5px;color:#222;text-align:center">3</div>
<div class="b" style="left:0px;top:381px;width:33px;height:1px;background:#c4c4c4"></div>
<div class="t" style="left:0;width:33px;top:362px;font-size:15.5px;color:#222;text-align:center">4</div>
<div class="b" style="left:0px;top:403px;width:33px;height:1px;background:#c4c4c4"></div>
<div class="t" style="left:0;width:33px;top:384px;font-size:15.5px;color:#222;text-align:center">5</div>
<div class="b" style="left:0px;top:425px;width:33px;height:1px;background:#c4c4c4"></div>
<div class="t" style="left:0;width:33px;top:406px;font-size:15.5px;color:#222;text-align:center">6</div>
<div class="b" style="left:0px;top:447px;width:33px;height:1px;background:#c4c4c4"></div>
<div class="t" style="left:0;width:33px;top:428px;font-size:15.5px;color:#222;text-align:center">7</div>
<div class="b" style="left:0px;top:469px;width:33px;height:1px;background:#c4c4c4"></div>
<div class="t" style="left:0;width:33px;top:450px;font-size:15.5px;color:#222;text-align:center">8</div>
<div class="b" style="left:0px;top:491px;width:33px;height:1px;background:#c4c4c4"></div>
<div class="t" style="left:0;width:33px;top:472px;font-size:15.5px;color:#222;text-align:center">9</div>
<div class="b" style="left:0px;top:513px;width:33px;height:1px;background:#c4c4c4"></div>
<div class="t" style="left:0;width:33px;top:494px;font-size:15.5px;color:#222;text-align:center">10</div>
<div class="b" style="left:0px;top:535px;width:33px;height:1px;background:#c4c4c4"></div>
<div class="t" style="left:0;width:33px;top:516px;font-size:15.5px;color:#222;text-align:center">11</div>
<div class="b" style="left:0px;top:557px;width:33px;height:1px;background:#c4c4c4"></div>
<div class="t" style="left:0;width:33px;top:538px;font-size:15.5px;color:#222;text-align:center">12</div>
<div class="b" style="left:0px;top:579px;width:33px;height:1px;background:#c4c4c4"></div>
<div class="t" style="left:0;width:33px;top:560px;font-size:15.5px;color:#222;text-align:center">13</div>
<div class="b" style="left:0px;top:601px;width:33px;height:1px;background:#c4c4c4"></div>
<div class="t" style="left:0;width:33px;top:582px;font-size:15.5px;color:#222;text-align:center">14</div>
<div class="b" style="left:0px;top:623px;width:33px;height:1px;background:#c4c4c4"></div>
<div class="t" style="left:0;width:33px;top:604px;font-size:15.5px;color:#222;text-align:center">15</div>
<div class="b" style="left:0px;top:645px;width:33px;height:1px;background:#c4c4c4"></div>
<div class="t" style="left:0;width:33px;top:626px;font-size:15.5px;color:#222;text-align:center">16</div>
<div class="b" style="left:0px;top:667px;width:33px;height:1px;background:#c4c4c4"></div>
<div class="t" style="left:0;width:33px;top:648px;font-size:15.5px;color:#222;text-align:center">17</div>
<div class="b" style="left:0px;top:689px;width:33px;height:1px;background:#c4c4c4"></div>
<div class="t" style="left:0;width:33px;top:670px;font-size:15.5px;color:#222;text-align:center">18</div>
<div class="b" style="left:0px;top:711px;width:33px;height:1px;background:#c4c4c4"></div>
<div class="t" style="left:0;width:33px;top:692px;font-size:15.5px;color:#222;text-align:center">19</div>
<div class="b" style="left:0px;top:733px;width:33px;height:1px;background:#c4c4c4"></div>
<div class="t" style="left:0;width:33px;top:714px;font-size:15.5px;color:#222;text-align:center">20</div>
<div class="b" style="left:0px;top:755px;width:33px;height:1px;background:#c4c4c4"></div>
<div class="t" style="left:0;width:33px;top:736px;font-size:15.5px;color:#222;text-align:center">21</div>
<div class="b" style="left:0px;top:777px;width:33px;height:1px;background:#c4c4c4"></div>
<div class="t" style="left:0;width:33px;top:758px;font-size:15.5px;color:#222;text-align:center">22</div>
<div class="b" style="left:0px;top:799px;width:33px;height:1px;background:#c4c4c4"></div>
<div class="t" style="left:0;width:33px;top:780px;font-size:15.5px;color:#222;text-align:center">23</div>
<div class="b" style="left:0px;top:821px;width:33px;height:1px;background:#c4c4c4"></div>
<div class="t" style="left:0;width:33px;top:802px;font-size:15.5px;color:#222;text-align:center">24</div>
<div class="b" style="left:0px;top:843px;width:33px;height:1px;background:#c4c4c4"></div>
<div class="t" style="left:0;width:33px;top:824px;font-size:15.5px;color:#222;text-align:center">25</div>
<div class="b" style="left:34px;top:359px;width:1385px;height:1px;background:#d4d4d4"></div>
<div class="b" style="left:34px;top:381px;width:1385px;height:1px;background:#d4d4d4"></div>
<div class="b" style="left:34px;top:403px;width:1385px;height:1px;background:#d4d4d4"></div>
<div class="b" style="left:34px;top:425px;width:1385px;height:1px;background:#d4d4d4"></div>
<div class="b" style="left:34px;top:447px;width:1385px;height:1px;background:#d4d4d4"></div>
<div class="b" style="left:34px;top:469px;width:1385px;height:1px;background:#d4d4d4"></div>
<div class="b" style="left:34px;top:491px;width:1385px;height:1px;background:#d4d4d4"></div>
<div class="b" style="left:34px;top:513px;width:1385px;height:1px;background:#d4d4d4"></div>
<div class="b" style="left:34px;top:535px;width:1385px;height:1px;background:#d4d4d4"></div>
<div class="b" style="left:34px;top:557px;width:1385px;height:1px;background:#d4d4d4"></div>
<div class="b" style="left:34px;top:579px;width:1385px;height:1px;background:#d4d4d4"></div>
<div class="b" style="left:34px;top:601px;width:1385px;height:1px;background:#d4d4d4"></div>
<div class="b" style="left:34px;top:623px;width:1385px;height:1px;background:#d4d4d4"></div>
<div class="b" style="left:34px;top:645px;width:1385px;height:1px;background:#d4d4d4"></div>
<div class="b" style="left:34px;top:667px;width:1385px;height:1px;background:#d4d4d4"></div>
<div class="b" style="left:34px;top:689px;width:1385px;height:1px;background:#d4d4d4"></div>
<div class="b" style="left:34px;top:711px;width:1385px;height:1px;background:#d4d4d4"></div>
<div class="b" style="left:34px;top:733px;width:1385px;height:1px;background:#d4d4d4"></div>
<div class="b" style="left:34px;top:755px;width:1385px;height:1px;background:#d4d4d4"></div>
<div class="b" style="left:34px;top:777px;width:1385px;height:1px;background:#d4d4d4"></div>
<div class="b" style="left:34px;top:799px;width:1385px;height:1px;background:#d4d4d4"></div>
<div class="b" style="left:34px;top:821px;width:1385px;height:1px;background:#d4d4d4"></div>
<div class="b" style="left:34px;top:843px;width:1385px;height:1px;background:#d4d4d4"></div>
<div class="b" style="left:113px;top:306px;width:1px;height:505px;background:#d4d4d4"></div>
<div class="b" style="left:302px;top:306px;width:1px;height:505px;background:#d4d4d4"></div>
<div class="b" style="left:491px;top:306px;width:1px;height:505px;background:#d4d4d4"></div>
<div class="b" style="left:681px;top:306px;width:1px;height:505px;background:#d4d4d4"></div>
<div class="b" style="left:761px;top:306px;width:1px;height:505px;background:#d4d4d4"></div>
<div class="b" style="left:841px;top:306px;width:1px;height:505px;background:#d4d4d4"></div>
<div class="b" style="left:921px;top:306px;width:1px;height:505px;background:#d4d4d4"></div>
<div class="b" style="left:1001px;top:306px;width:1px;height:505px;background:#d4d4d4"></div>
<div class="b" style="left:1081px;top:306px;width:1px;height:505px;background:#d4d4d4"></div>
<div class="b" style="left:1161px;top:306px;width:1px;height:505px;background:#d4d4d4"></div>
<div class="b" style="left:1241px;top:306px;width:1px;height:505px;background:#d4d4d4"></div>
<div class="b" style="left:1321px;top:306px;width:1px;height:505px;background:#d4d4d4"></div>
<div class="b" style="left:1401px;top:306px;width:1px;height:505px;background:#d4d4d4"></div>
<div class="b" style="left:34px;top:256px;width:1385px;height:50px;background:#2e74b5"></div>
<div class="t" style="left:39px;top:267.5px;font-size:24px;color:#ffffff;font-weight:bold">Parse</div>
<div class="b" style="left:528px;top:267px;width:169px;height:30px;background:#eef0f2;border-top:1px solid #fbfdff;border-left:1px solid #fbfdff;box-shadow:inset -1px -1px 0 #fafcff, 1px 1px 0 #4f6a86, 2px 2px 1px rgba(20,40,70,0.55);box-sizing:border-box"></div>
<div class="t" style="left:530px;width:168px;top:275px;font-size:15px;color:#111;text-align:center;-webkit-text-stroke:0.2px #111">分列</div>
<div class="b" style="left:34px;top:306px;width:648px;height:30px;background:#b9d8f1"></div>
<div class="b" style="left:34px;top:336px;width:648px;height:2px;background:#000"></div>
<div class="b" style="left:682px;top:337px;width:736px;height:1px;background:#d4d4d4"></div>
<div class="t" style="left:34px;width:79px;top:313.5px;font-size:15px;color:#111;text-align:center;-webkit-text-stroke:0.2px #111">序号</div>
<div class="t" style="left:114px;width:188px;top:313.5px;font-size:15px;color:#111;text-align:center;-webkit-text-stroke:0.2px #111">电话</div>
<div class="t" style="left:303px;width:188px;top:313.5px;font-size:15px;color:#111;text-align:center;-webkit-text-stroke:0.2px #111">区号</div>
<div class="t" style="left:492px;width:189px;top:313.5px;font-size:15px;color:#111;text-align:center;-webkit-text-stroke:0.2px #111">电话</div>
<div class="t" style="left:34px;width:79px;top:341px;font-size:16px;color:#111;text-align:center;letter-spacing:0.2px">1</div>
<div class="t" style="left:117px;top:341px;font-size:16px;color:#111;letter-spacing:0.2px">010-1234567</div>
<div class="t" style="left:306px;top:341px;font-size:16px;color:#111;letter-spacing:0.2px">0010</div>
<div class="t" style="left:495px;top:341px;font-size:16px;color:#111;letter-spacing:0.2px">1234567</div>
<div class="t" style="left:34px;width:79px;top:363px;font-size:16px;color:#111;text-align:center;letter-spacing:0.2px">2</div>
<div class="t" style="left:117px;top:363px;font-size:16px;color:#111;letter-spacing:0.2px">010-1234567</div>
<div class="t" style="left:306px;top:363px;font-size:16px;color:#111;letter-spacing:0.2px">0010</div>
<div class="t" style="left:495px;top:363px;font-size:16px;color:#111;letter-spacing:0.2px">1234567</div>
<div class="t" style="left:34px;width:79px;top:385px;font-size:16px;color:#111;text-align:center;letter-spacing:0.2px">3</div>
<div class="t" style="left:117px;top:385px;font-size:16px;color:#111;letter-spacing:0.2px">010-1234567</div>
<div class="t" style="left:306px;top:385px;font-size:16px;color:#111;letter-spacing:0.2px">0010</div>
<div class="t" style="left:495px;top:385px;font-size:16px;color:#111;letter-spacing:0.2px">1234567</div>
<div class="t" style="left:34px;width:79px;top:407px;font-size:16px;color:#111;text-align:center;letter-spacing:0.2px">4</div>
<div class="t" style="left:117px;top:407px;font-size:16px;color:#111;letter-spacing:0.2px">010-1234567</div>
<div class="t" style="left:306px;top:407px;font-size:16px;color:#111;letter-spacing:0.2px">0010</div>
<div class="t" style="left:495px;top:407px;font-size:16px;color:#111;letter-spacing:0.2px">1234567</div>
<div class="t" style="left:34px;width:79px;top:429px;font-size:16px;color:#111;text-align:center;letter-spacing:0.2px">5</div>
<div class="t" style="left:117px;top:429px;font-size:16px;color:#111;letter-spacing:0.2px">010-1234567</div>
<div class="t" style="left:306px;top:429px;font-size:16px;color:#111;letter-spacing:0.2px">0010</div>
<div class="t" style="left:495px;top:429px;font-size:16px;color:#111;letter-spacing:0.2px">1234567</div>
<div class="t" style="left:34px;width:79px;top:451px;font-size:16px;color:#111;text-align:center;letter-spacing:0.2px">6</div>
<div class="t" style="left:117px;top:451px;font-size:16px;color:#111;letter-spacing:0.2px">010-1234567</div>
<div class="t" style="left:306px;top:451px;font-size:16px;color:#111;letter-spacing:0.2px">0010</div>
<div class="t" style="left:495px;top:451px;font-size:16px;color:#111;letter-spacing:0.2px">1234567</div>
<div class="t" style="left:34px;width:79px;top:473px;font-size:16px;color:#111;text-align:center;letter-spacing:0.2px">7</div>
<div class="t" style="left:117px;top:473px;font-size:16px;color:#111;letter-spacing:0.2px">010-1234567</div>
<div class="t" style="left:306px;top:473px;font-size:16px;color:#111;letter-spacing:0.2px">0010</div>
<div class="t" style="left:495px;top:473px;font-size:16px;color:#111;letter-spacing:0.2px">1234567</div>
<div class="t" style="left:34px;width:79px;top:495px;font-size:16px;color:#111;text-align:center;letter-spacing:0.2px">8</div>
<div class="t" style="left:117px;top:495px;font-size:16px;color:#111;letter-spacing:0.2px">010-1234567</div>
<div class="t" style="left:306px;top:495px;font-size:16px;color:#111;letter-spacing:0.2px">0010</div>
<div class="t" style="left:495px;top:495px;font-size:16px;color:#111;letter-spacing:0.2px">1234567</div>
<div class="t" style="left:34px;width:79px;top:517px;font-size:16px;color:#111;text-align:center;letter-spacing:0.2px">9</div>
<div class="t" style="left:117px;top:517px;font-size:16px;color:#111;letter-spacing:0.2px">010-1234567</div>
<div class="t" style="left:306px;top:517px;font-size:16px;color:#111;letter-spacing:0.2px">0010</div>
<div class="t" style="left:495px;top:517px;font-size:16px;color:#111;letter-spacing:0.2px">1234567</div>
<div class="t" style="left:34px;width:79px;top:539px;font-size:16px;color:#111;text-align:center;letter-spacing:0.2px">10</div>
<div class="t" style="left:117px;top:539px;font-size:16px;color:#111;letter-spacing:0.2px">010-1234567</div>
<div class="t" style="left:306px;top:539px;font-size:16px;color:#111;letter-spacing:0.2px">0010</div>
<div class="t" style="left:495px;top:539px;font-size:16px;color:#111;letter-spacing:0.2px">1234567</div>
<div class="t" style="left:34px;width:79px;top:561px;font-size:16px;color:#111;text-align:center;letter-spacing:0.2px">11</div>
<div class="t" style="left:117px;top:561px;font-size:16px;color:#111;letter-spacing:0.2px">010-1234567</div>
<div class="t" style="left:306px;top:561px;font-size:16px;color:#111;letter-spacing:0.2px">0010</div>
<div class="t" style="left:495px;top:561px;font-size:16px;color:#111;letter-spacing:0.2px">1234567</div>
<div class="t" style="left:34px;width:79px;top:583px;font-size:16px;color:#111;text-align:center;letter-spacing:0.2px">12</div>
<div class="t" style="left:117px;top:583px;font-size:16px;color:#111;letter-spacing:0.2px">010-1234567</div>
<div class="t" style="left:306px;top:583px;font-size:16px;color:#111;letter-spacing:0.2px">0010</div>
<div class="t" style="left:495px;top:583px;font-size:16px;color:#111;letter-spacing:0.2px">1234567</div>
<div class="t" style="left:34px;width:79px;top:605px;font-size:16px;color:#111;text-align:center;letter-spacing:0.2px">13</div>
<div class="t" style="left:117px;top:605px;font-size:16px;color:#111;letter-spacing:0.2px">010-1234567</div>
<div class="t" style="left:306px;top:605px;font-size:16px;color:#111;letter-spacing:0.2px">0010</div>
<div class="t" style="left:495px;top:605px;font-size:16px;color:#111;letter-spacing:0.2px">1234567</div>
<div class="t" style="left:34px;width:79px;top:627px;font-size:16px;color:#111;text-align:center;letter-spacing:0.2px">14</div>
<div class="t" style="left:117px;top:627px;font-size:16px;color:#111;letter-spacing:0.2px">010-1234567</div>
<div class="t" style="left:306px;top:627px;font-size:16px;color:#111;letter-spacing:0.2px">0010</div>
<div class="t" style="left:495px;top:627px;font-size:16px;color:#111;letter-spacing:0.2px">1234567</div>
<div class="t" style="left:34px;width:79px;top:649px;font-size:16px;color:#111;text-align:center;letter-spacing:0.2px">15</div>
<div class="t" style="left:117px;top:649px;font-size:16px;color:#111;letter-spacing:0.2px">010-1234567</div>
<div class="t" style="left:306px;top:649px;font-size:16px;color:#111;letter-spacing:0.2px">0010</div>
<div class="t" style="left:495px;top:649px;font-size:16px;color:#111;letter-spacing:0.2px">1234567</div>
<div class="t" style="left:34px;width:79px;top:671px;font-size:16px;color:#111;text-align:center;letter-spacing:0.2px">16</div>
<div class="t" style="left:117px;top:671px;font-size:16px;color:#111;letter-spacing:0.2px">010-1234567</div>
<div class="t" style="left:306px;top:671px;font-size:16px;color:#111;letter-spacing:0.2px">0010</div>
<div class="t" style="left:495px;top:671px;font-size:16px;color:#111;letter-spacing:0.2px">1234567</div>
<div class="b" style="left:1418px;top:256px;width:1px;height:555px;background:#9a9a9a"></div>
<div class="b" style="left:1419px;top:233px;width:19px;height:578px;background:#e6e6e6"></div>
<div class="b" style="left:1422px;top:239px;width:15px;height:572px;background:#fff;border:1px solid #c6c6c6;box-sizing:border-box"></div>
<div class="b" style="left:1422px;top:253px;width:15px;height:1px;background:#c6c6c6"></div>
<svg class="b" style="left:1425px;top:244px" width="9" height="5" viewBox="0 0 9 5"><path d="M0 5H9L4.5 0Z" fill="#777"/></svg>
<div class="b" style="left:1423px;top:771px;width:13px;height:25px;background:#dadada"></div>
<div class="b" style="left:1422px;top:796px;width:15px;height:1px;background:#c6c6c6"></div>
<svg class="b" style="left:1425px;top:801px" width="9" height="5" viewBox="0 0 9 5"><path d="M0 0H9L4.5 5Z" fill="#777"/></svg>
<div class="b" style="left:0px;top:810px;width:100px;height:1px;background:#8a8a8a"></div>
<div class="b" style="left:168px;top:810px;width:1250px;height:1px;background:#8a8a8a"></div>
</body></html>
